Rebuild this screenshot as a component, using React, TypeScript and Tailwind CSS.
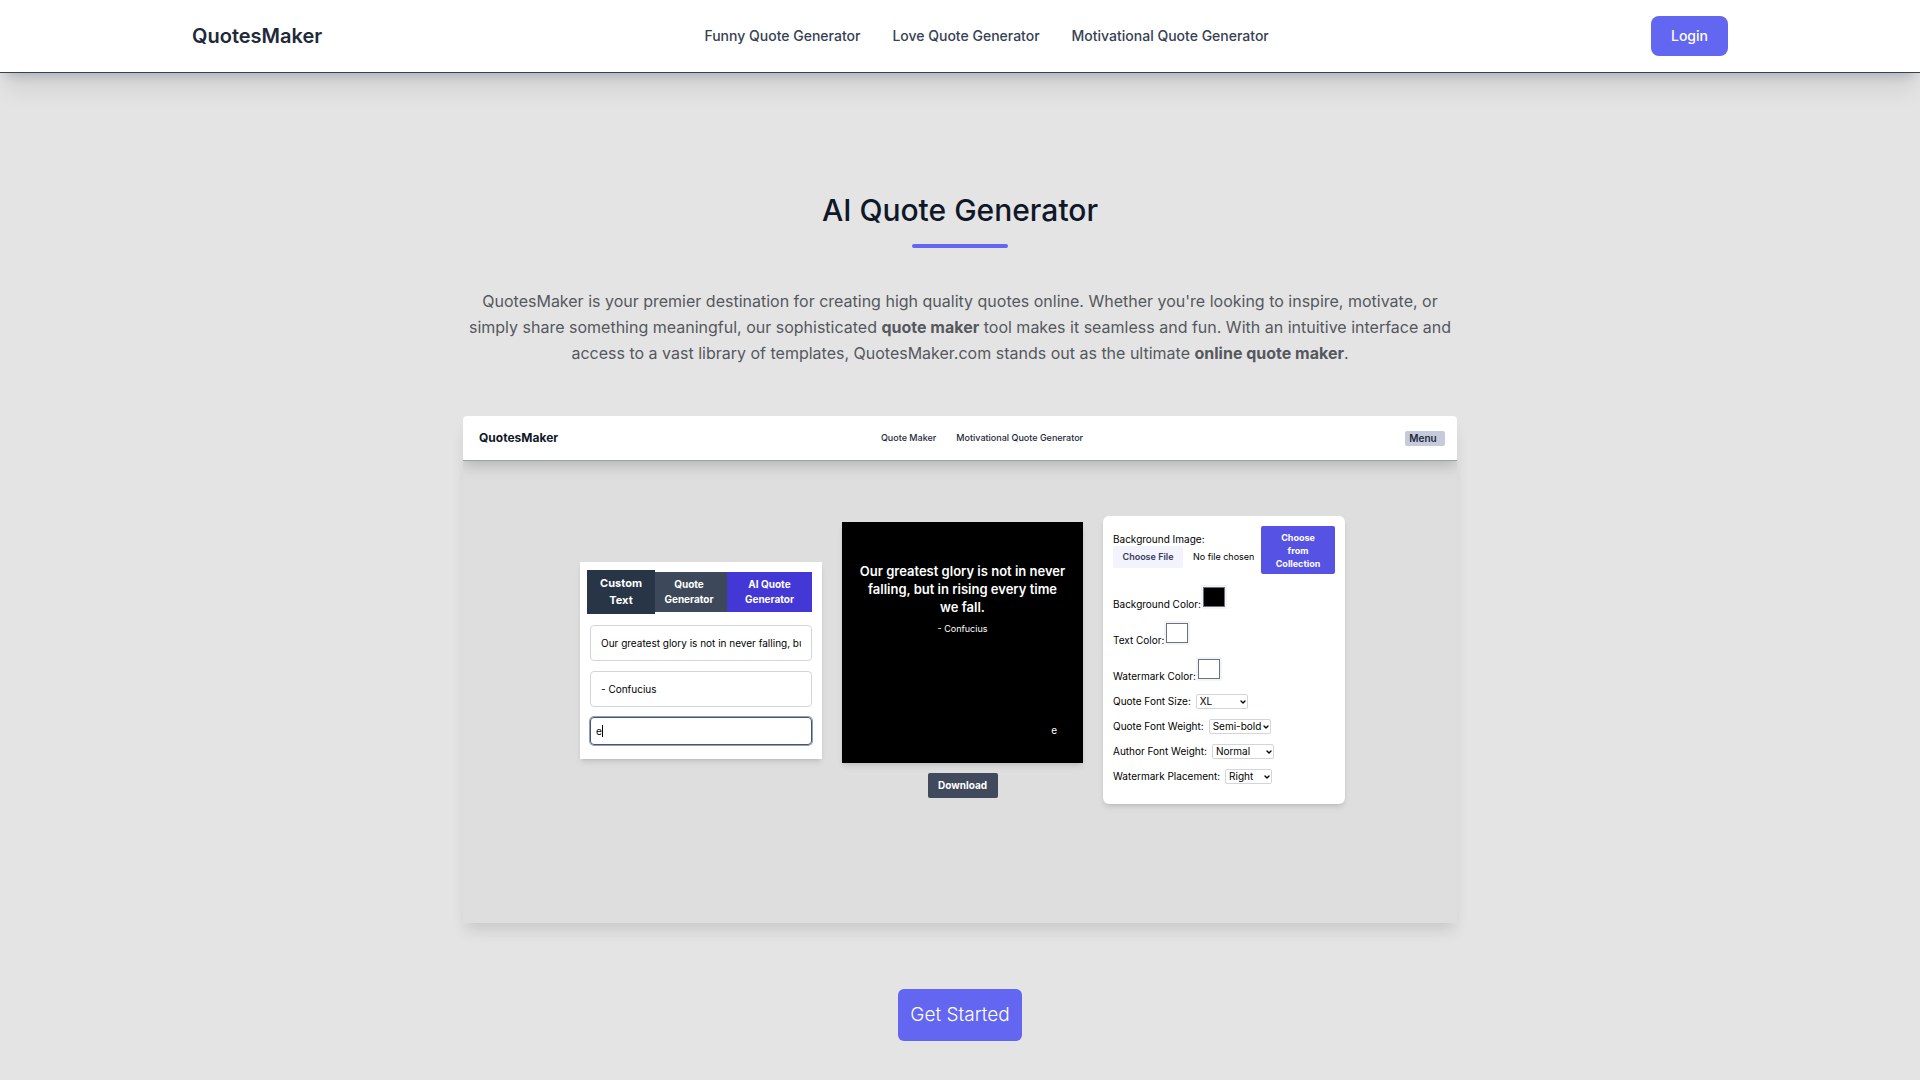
import { useState } from 'react';
import { ChevronDown } from 'lucide-react';

const navLinks = ['Funny Quote Generator', 'Love Quote Generator', 'Motivational Quote Generator'];

function Header() {
  return (
    <header className="border-b border-gray-700 bg-white shadow-[0_20px_25px_-5px_rgba(0,0,0,0.09),0_8px_10px_-6px_rgba(31,41,55,0.2)]">
      <div className="mx-auto flex h-18 max-w-[1536px] items-center justify-between">
        <a href="#home" className="text-xl font-semibold text-gray-800">
          QuotesMaker
        </a>
        <nav className="flex gap-8 text-sm font-medium text-gray-700">
          {navLinks.map((label) => (
            <a key={label} href="#generator">
              {label}
            </a>
          ))}
        </nav>
        <button type="button" className="h-10 rounded-lg bg-[#6366f1] px-5 text-sm font-medium text-white">
          Login
        </button>
      </div>
    </header>
  );
}

function TextPanel() {
  const [quote, setQuote] = useState('Our greatest glory is not in never falling, but in rising every time we fall.');
  const [author, setAuthor] = useState('- Confucius');
  const [watermark, setWatermark] = useState('e');
  return (
    <section className="w-[242px] bg-white px-[7px] pt-2 pb-[14px] shadow-md">
      <div className="mr-[3px] flex items-center text-[10px] leading-[15px] font-bold text-white">
        <button type="button" className="h-11 w-[68px] bg-[#283547] text-[11px] leading-[17px]">
          Custom
          <br />
          Text
        </button>
        <button type="button" className="h-10 w-[72px] bg-[#3d495a] pr-1">
          Quote
          <br />
          Generator
        </button>
        <button type="button" className="h-10 flex-1 bg-[#4338d5]">
          AI Quote
          <br />
          Generator
        </button>
      </div>
      <div className="mx-[3px] mt-[11px] flex flex-col gap-2.5 text-[10px] text-black">
        <input
          aria-label="Quote"
          value={quote}
          onChange={(e) => setQuote(e.target.value)}
          className="h-9 w-full rounded-sm border border-gray-300 px-2.5"
        />
        <input
          aria-label="Author"
          value={author}
          onChange={(e) => setAuthor(e.target.value)}
          className="h-9 w-full rounded-sm border border-gray-300 px-2.5"
        />
        <div className="relative">
          <input
            aria-label="Watermark"
            value={watermark}
            onChange={(e) => setWatermark(e.target.value)}
            className="h-7 w-full rounded-sm border border-slate-600 px-[5px] ring-1 ring-slate-400"
          />
          <span className="absolute top-2 left-3 h-3 w-px bg-black" />
        </div>
      </div>
    </section>
  );
}

function Preview() {
  return (
    <section className="flex w-[241px] flex-col items-center">
      <div className="flex h-[241px] w-full flex-col bg-black px-4 pt-10 pb-6 text-center text-white shadow-md">
        <p className="text-[13px] leading-[18px] font-semibold">
          Our greatest glory is not in never falling, but in rising every time we fall.
        </p>
        <p className="mt-1.5 text-[9px] leading-[14px]">- Confucius</p>
        <p className="mt-auto mr-2.5 text-right text-[10px] leading-[18px]">e</p>
      </div>
      <button type="button" className="mt-2.5 h-[25px] w-[70px] rounded-xs bg-[#404a5c] text-[10px] font-bold text-white">
        Download
      </button>
    </section>
  );
}

function ColorRow({ id, label, value }: { id: string; label: string; value: string }) {
  return (
    <div className="flex h-9 items-end">
      <label htmlFor={id} className="leading-3">
        {label}
      </label>
      <input
        id={id}
        type="color"
        defaultValue={value}
        className="mb-px h-6 w-[26px] border-2 border-gray-100 bg-white p-0 [&::-webkit-color-swatch]:rounded-none [&::-webkit-color-swatch]:border [&::-webkit-color-swatch]:border-gray-500 [&::-webkit-color-swatch-wrapper]:p-0"
      />
    </div>
  );
}

const selects = [
  { id: 'quote-size', label: 'Quote Font Size:', value: 'XL', width: 'w-[52px]' },
  { id: 'quote-weight', label: 'Quote Font Weight:', value: 'Semi-bold', width: 'w-[62px]' },
  { id: 'author-weight', label: 'Author Font Weight:', value: 'Normal', width: 'w-[62px]' },
  { id: 'placement', label: 'Watermark Placement:', value: 'Right', width: 'w-[47px]' },
];

function OptionsPanel() {
  return (
    <section className="h-72 w-[242px] rounded-md bg-white px-2.5 pt-2.5 text-[10px] text-black shadow-md">
      <div className="flex h-12 justify-between">
        <div className="pt-[6px]">
          <label htmlFor="bg-image" className="block leading-[14px]">
            Background Image:
          </label>
          <input
            id="bg-image"
            type="file"
            className="block h-[22px] w-[146px] text-[9px] file:mr-2.5 file:h-[22px] file:w-[70px] file:rounded-xs file:bg-[#f3f3fe] file:text-[9px] file:font-semibold file:text-[#353b5c]"
          />
        </div>
        <button
          type="button"
          className="h-12 w-[74px] rounded-xs bg-[#5653e4] px-3 text-[9px] leading-[13px] font-bold text-white"
        >
          Choose from Collection
        </button>
      </div>
      <ColorRow id="bg-color" label="Background Color:" value="#000000" />
      <ColorRow id="text-color" label="Text Color:" value="#ffffff" />
      <ColorRow id="mark-color" label="Watermark Color:" value="#ffffff" />
      <div className="mt-3 flex flex-col gap-2.5">
        {selects.map((s) => (
          <div key={s.id} className="flex h-[15px] items-center gap-[5px]">
            <label htmlFor={s.id}>{s.label}</label>
            <div className={`relative ${s.width}`}>
              <select
                id={s.id}
                className="block h-[15px] w-full appearance-none rounded-xs border border-gray-300 bg-white pl-[3px] leading-[13px]"
              >
                <option>{s.value}</option>
              </select>
              <ChevronDown className="pointer-events-none absolute top-1 right-px size-2" strokeWidth={4} />
            </div>
          </div>
        ))}
      </div>
    </section>
  );
}

function AppPreview() {
  return (
    <div className="mx-auto mt-[50px] max-w-[994px] overflow-hidden rounded-t-sm bg-[#dedede] shadow-[0_10px_15px_-3px_rgba(0,0,0,0.12)]">
      <div className="grid h-[45px] grid-cols-[1fr_auto_1fr] items-center border-b border-gray-400 bg-white pr-3 pl-4 shadow-[0_4px_14px_rgba(0,0,0,0.2)]">
        <a href="#home" className="text-[12px] font-bold text-gray-900">
          QuotesMaker
        </a>
        <nav className="flex gap-5 pl-10 text-[9px] font-medium text-gray-800">
          <a href="#quote-maker">Quote Maker</a>
          <a href="#motivational">Motivational Quote Generator</a>
        </nav>
        <button
          type="button"
          className="h-[15px] w-10 justify-self-end rounded-xs bg-[#c5cbdb] pr-1 text-[10px] leading-none font-semibold text-gray-800"
        >
          Menu
        </button>
      </div>
      <div className="flex items-center justify-center gap-5 pt-[55px] pb-[119px] pl-[5px]">
        <TextPanel />
        <Preview />
        <OptionsPanel />
      </div>
    </div>
  );
}

export default function App() {
  return (
    <div className="min-h-screen bg-[#e4e4e4] font-['Inter',sans-serif]">
      <Header />
      <main className="px-4 pt-[119px] pb-10">
        <h1 className="text-center text-3xl font-medium text-gray-900">AI Quote Generator</h1>
        <div className="mx-auto mt-4 h-1 w-24 rounded-full bg-[#6366f1]" />
        <p className="mx-auto mt-10 max-w-[994px] text-center text-base leading-[26px] text-[#55585e]">
          QuotesMaker is your premier destination for creating high quality quotes online. Whether you're looking to
          inspire, motivate, or simply share something meaningful, our sophisticated <strong>quote maker</strong> tool
          makes it seamless and fun. With an intuitive interface and access to a vast library of templates,
          QuotesMaker.com stands out as the ultimate <strong>online quote maker</strong>.
        </p>
        <AppPreview />
        <div className="mt-[66px] flex justify-center">
          <button type="button" className="h-13 rounded-md bg-[#6366f1] px-3 text-[19px] font-light text-white">
            Get Started
          </button>
        </div>
      </main>
    </div>
  );
}
